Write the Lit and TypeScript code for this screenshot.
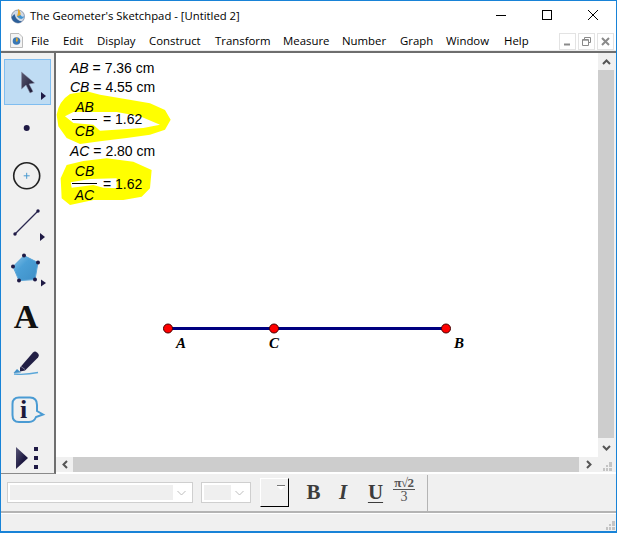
import { LitElement, html, css, svg } from "lit";
import { customElement } from "lit/decorators.js";

const menus: [string, number][] = [
  ["File", 32], ["Edit", 34], ["Display", 52], ["Construct", 66], ["Transform", 68],
  ["Measure", 59], ["Number", 58], ["Graph", 46], ["Window", 58], ["Help", 30],
];

const navy = "#1f1a45";

const toolIcons = [
  svg`<defs><linearGradient id="ar" x1="0" y1="0" x2="1" y2="1"><stop offset="0" stop-color="#5a5a72"/><stop offset="1" stop-color="#15122e"/></linearGradient></defs>
    <path d="M20.5 13 L20.5 30 L25 26 L29 34 L32 32.5 L28 25 L33.5 24 Z" fill="url(#ar)" stroke="#8a90a8" stroke-width=".5"/>
    <path d="M40 33 L45 37 L40 41 Z" fill="${navy}"/>`,
  svg`<circle cx="25.7" cy="22" r="3" fill="${navy}"/>`,
  svg`<circle cx="25.7" cy="23.8" r="13" fill="none" stroke="#222" stroke-width="1.6"/>
    <path d="M25.7 20.8 V26.8 M22.7 23.8 H28.7" stroke="#4a9bd0" stroke-width="1"/>`,
  svg`<path d="M14 35 L37 12" stroke="#2a2850" stroke-width="1.3"/>
    <circle cx="14" cy="35" r="1.7" fill="${navy}"/><circle cx="37" cy="12" r="1.7" fill="${navy}"/>
    <path d="M39 34 L44 38 L39 42 Z" fill="${navy}"/>`,
  svg`<defs><linearGradient id="pg" x1="0" y1="0" x2="1" y2="1"><stop offset="0" stop-color="#8cc6ea"/><stop offset=".4" stop-color="#4a9fd6"/><stop offset="1" stop-color="#3e8ec6"/></linearGradient></defs>
    <path d="M23 10.6 L37 17.6 L34 34.6 L18 35.6 L12 21.6 Z" fill="url(#pg)" stroke="#5aa5d8" stroke-width="1"/>
    ${[[23, 10.6], [37, 17.6], [34, 34.6], [18, 35.6], [12, 21.6]].map(([x, y]) => svg`<circle cx="${x}" cy="${y}" r="2" fill="${navy}"/>`)}
    <path d="M40 34.6 L45 38.1 L40 41.6 Z" fill="${navy}"/>`,
  svg`<text x="25" y="36" text-anchor="middle" class="big-a">A</text>`,
  svg`<g transform="translate(-1 1.5)">
    <path d="M20 27 L33 12 Q35 10 37 12 L38.5 13.5 Q39.5 15 38 17 L25 30 L20 31 Z" fill="#221f45"/>
    <path d="M21 26 L25 29" stroke="#7b7a95" stroke-width="1"/>
    <path d="M13.5 32.5 L17 28.5 L21 32 Z" fill="#3f8fc7"/>
    <path d="M14 33.5 Q26 34.5 38 32" stroke="#5ba7d9" stroke-width="1.3" fill="none"/></g>`,
  svg`<path d="M18 12.5 H29 Q36 12.5 36 20 V26 L42 29.5 L35 32 Q33 37 28 37 H18 Q11.5 37 11.5 30 V19 Q11.5 12.5 18 12.5 Z" fill="none" stroke="#4a9bd3" stroke-width="2"/>
    <text x="22.5" y="33" text-anchor="middle" class="info">i</text>`,
  svg`<defs><linearGradient id="pl" x1="0" y1="0" x2="1" y2="1"><stop offset="0" stop-color="#5a5878"/><stop offset=".6" stop-color="#1c1840"/></linearGradient></defs>
    <path d="M15 15 L27 26 L15 37 Z" fill="url(#pl)"/>
    <path d="M33 15 h4 v4 h-4 Z M33 24 h4 v4 h-4 Z M33 33 h4 v4 h-4 Z" fill="${navy}"/>`,
];

@customElement("app-root")
export class AppRoot extends LitElement {
  static styles = css`
    :host {
      display: block;
      width: 617px;
      height: 533px;
      font-family: "Open Sans", "Liberation Sans", sans-serif;
      color: #000;
    }
    .window {
      box-sizing: border-box;
      width: 617px;
      height: 533px;
      border: 1px solid #1883d7;
      border-bottom-width: 2px;
      background: #f0f0f0;
      display: flex;
      flex-direction: column;
      overflow: hidden;
    }
    .title {
      height: 29px;
      flex: none;
      background: #fff;
      display: flex;
      align-items: center;
      font-size: 11.3px;
      padding-left: 9px;
    }
    .title-text { margin-left: 4px; margin-top: -1px; white-space: nowrap; }
    .controls { margin-left: auto; display: flex; }
    .controls svg { width: 46px; height: 29px; display: block; }
    .menubar {
      height: 21px;
      flex: none;
      background: #fff;
      display: flex;
      align-items: center;
      font-size: 11.4px;
      padding-left: 9px;
      box-shadow: inset 0 -1px 0 #ececec;
    }
    .doc { margin-right: 8px; flex: none; }
    .menu-item { white-space: nowrap; flex: none; }
    .mdi { margin-left: auto; display: flex; gap: 2px; padding-right: 2px; margin-top: 2px; }
    .mdi span {
      box-sizing: border-box;
      width: 17px;
      height: 17px;
      border: 1px solid #e3e3e3;
      display: flex;
      align-items: center;
      justify-content: center;
    }
    .rule { height: 2px; flex: none; background: #6e6e6e; }
    .body { flex: none; height: 421px; display: flex; }
    .tools {
      width: 55px;
      flex: none;
      box-sizing: border-box;
      border-right: 2px solid #6f6f6f;
      border-bottom: 1px solid #8a8a8a;
      height: 421px;
      padding: 6px 0 0 3px;
      background: #f0f0f0;
      display: grid;
      grid-auto-rows: 46.6px;
    }
    .tool { width: 47px; height: 46px; box-sizing: border-box; border: 1px solid transparent; }
    .tool.on { background: #bfdcf3; border-color: #7fbdf0; }
    .tool svg { display: block; width: 52px; height: 46px; margin: -1px 0 0 -4px; overflow: visible; }
    .big-a { font: bold 34px "Liberation Serif", serif; fill: #111; }
    .info { font: bold 26px "Liberation Serif", serif; fill: #1c1a3c; }
    .main { flex: 1; display: flex; flex-direction: column; min-width: 0; background: #fff; }
    .view { flex: none; height: 404px; display: flex; background: #f0f0f0; }
    .canvas { position: relative; flex: 1; background: #fff; overflow: hidden; }
    .canvas > svg { position: absolute; inset: 0; width: 100%; height: 100%; }
    .measures {
      position: absolute;
      left: 14px;
      top: 6px;
      font: 14px "Liberation Sans", Arial, sans-serif;
      color: #000;
    }
    .line { height: 18.5px; line-height: 18.5px; white-space: nowrap; }
    .ratio { display: flex; align-items: center; height: 46px; padding-left: 2px; }
    .frac { display: flex; flex-direction: column; align-items: center; width: 25px; line-height: 19px; }
    .frac i:first-child { border-bottom: 1px solid #000; padding-bottom: 2px; width: 100%; text-align: center; }
    .frac i:last-child { padding-top: 2px; }
    .ratio span { margin-left: 6px; }
    .label {
      position: absolute;
      font: italic bold 15px "Liberation Serif", serif;
      color: #000;
    }
    .vbar { width: 16px; flex: none; margin-right: 2px; display: flex; flex-direction: column; background: #f0f0f0; }
    .vthumb { flex: 1; background: #cdcdcd; }
    .arrow-v { height: 17px; flex: none; display: flex; align-items: center; justify-content: center; }
    .arrow-v.down { height: 19px; }
    .hbar { height: 15px; flex: none; display: flex; background: #f0f0f0; }
    .arrow-h { width: 17px; flex: none; display: flex; align-items: center; justify-content: center; }
    .arrow-h.right { width: 19px; }
    .hthumb { flex: 1; background: #cdcdcd; }
    .corner { width: 18px; flex: none; display: flex; align-items: flex-end; justify-content: flex-end; padding: 0 4px 1px 0; box-sizing: border-box; }
    .format {
      height: 37px;
      flex: none;
      display: flex;
      align-items: center;
      padding-left: 6px;
      box-sizing: border-box;
    }
    .combo {
      box-sizing: border-box;
      height: 21px;
      border: 1px solid #cfcfcf;
      background: #fff;
      padding: 2px;
      display: flex;
      align-items: stretch;
    }
    .combo b { display: block; background: #efefef; }
    .combo svg { margin: auto; }
    .combo.a { width: 186px; }
    .combo.a b { width: 163px; }
    .combo.b { width: 50px; margin-left: 8px; }
    .combo.b b { width: 27px; }
    .swatch {
      box-sizing: border-box;
      width: 29px;
      height: 29px;
      margin-left: 9px;
      border: 1px solid;
      border-color: #fff #000 #000 #fff;
      position: relative;
      flex: none;
    }
    .swatch::before {
      content: "";
      position: absolute;
      right: 3px;
      top: 6px;
      width: 8px;
      height: 1px;
      background: #777;
    }
    .swatch::after {
      content: "";
      position: absolute;
      right: 3px;
      top: 7px;
      border: 4px solid transparent;
      border-top-color: #fff;
    }
    .styles {
      display: flex;
      align-items: center;
      font-family: "Liberation Serif", serif;
      color: #3c3c3c;
      margin-left: 16px;
      font-size: 21px;
      font-weight: bold;
      height: 36px;
    }
    .styles span { display: block; text-align: center; }
    .st-b { width: 17px; }
    .st-i { width: 10px; margin-left: 16px; font-style: italic; }
    .st-u { width: 17px; margin-left: 19px; text-decoration: underline; text-underline-offset: 3px; text-decoration-thickness: 1px; }
    .st-f {
      margin-left: 9px;
      width: 22px;
      display: flex !important;
      flex-direction: column;
      align-items: center;
      color: #555;
      margin-top: -4px;
    }
    .st-f u { display: block; text-decoration: none; border-bottom: 1px solid #555; font-size: 13px; letter-spacing: -.5px; width: 100%; line-height: 12px; }
    .st-f em { font-style: normal; font-weight: normal; font-size: 14px; line-height: 14px; }
    .sep { width: 1px; height: 36px; background: #b4b4b4; margin-left: 12px; }
    .status {
      flex: 1;
      border-top: 2px solid #b4b4b4;
      box-shadow: inset 0 1px 0 #fff;
      display: flex;
      align-items: flex-end;
      justify-content: flex-end;
      padding: 0 1px 1px 0;
    }
    .grip { display: block; }
  `;

  private grip() {
    return html`<svg class="grip" width="9" height="9" viewBox="0 0 9 9" fill="#c4c4c4">
      <path d="M6 0h3v3H6z M3 3h2v2H3z M6 3h3v2H6z M0 6h2v3H0z M3 6h2v3H3z M6 6h3v3H6z" />
    </svg>`;
  }

  private chevron() {
    return html`<svg width="9" height="6" viewBox="0 0 9 6"><path d="M.5 1 L4.5 5 L8.5 1" fill="none" stroke="#bdbdbd" /></svg>`;
  }

  render() {
    return html`
      <div class="window">
        <div class="title">
          <svg width="16" height="16" viewBox="0 0 16 16">
            <circle cx="8" cy="8.5" r="6.5" fill="#cfd9e6" stroke="#7f8aa0" stroke-width=".8" />
            <path d="M1.6 9 A6.5 6.5 0 0 0 12 13.5 Q6 13 4.5 6 Z" fill="#2c5f99" />
            <path d="M8 .8 Q12.5 5 9.5 10.5 L7 8.5 Q8.5 5 8 .8 Z" fill="#e6a92a" />
            <path d="M7 8.5 L9.5 10.5 Q13 12 14.5 8 Q12 10 10.5 7 Z" fill="#3f93d4" />
          </svg>
          <span class="title-text">The Geometer's Sketchpad - [Untitled 2]</span>
          <div class="controls">
            <svg viewBox="0 0 46 29"><path d="M18 14.5 H28" stroke="#000" /></svg>
            <svg viewBox="0 0 46 29"><rect x="18.5" y="9.5" width="9" height="9" fill="none" stroke="#000" /></svg>
            <svg viewBox="0 0 46 29"><path d="M18 9 L28 19 M28 9 L18 19" stroke="#000" /></svg>
          </div>
        </div>
        <div class="menubar">
          <svg class="doc" width="13" height="15" viewBox="0 0 13 15">
            <path d="M.5 .5 H9 L12.5 4 V14.5 H.5 Z" fill="#f4f4f4" stroke="#bbb" />
            <circle cx="6.5" cy="8" r="3.8" fill="#3a78b5" />
            <path d="M6.5 4 Q9 6.5 7 9 L5.8 8 Z" fill="#e6a92a" />
          </svg>
          ${menus.map(([m, w]) => html`<span class="menu-item" style="width:${w}px">${m}</span>`)}
          <div class="mdi">
            <span><svg width="9" height="9" viewBox="0 0 9 9"><path d="M1 7.5 H7" stroke="#8a8a8a" stroke-width="2" /></svg></span>
            <span><svg width="9" height="9" viewBox="0 0 9 9"><path d="M2.5 2.5 V.5 H8.5 V5.5 H6.5 M.5 2.5 H6.5 V8.5 H.5 Z M.5 3.2 H6.5" fill="none" stroke="#8a8a8a" /></svg></span>
            <span><svg width="9" height="9" viewBox="0 0 9 9"><path d="M1 1 L8 8 M8 1 L1 8" stroke="#8a8a8a" stroke-width="2" /></svg></span>
          </div>
        </div>
        <div class="rule"></div>
        <div class="body">
          <div class="tools">
            ${toolIcons.map(
              (ic, i) => html`<div class="tool ${i === 0 ? "on" : ""}"><svg viewBox="0 0 52 46">${ic}</svg></div>`
            )}
          </div>
          <div class="main">
            <div class="view">
              <div class="canvas">
                <svg viewBox="56 53 542 404">
                  <g transform="translate(50 88) scale(.3333)">
                    <path fill="#ffff00" fill-rule="evenodd" d="M20 80 Q26 40 60 18 L110 10 L150 20 L230 34 L300 46 L345 66 L362 95 L345 125 L300 140 L230 150 L150 160 L90 168 L50 150 L25 115 Z M45 85 L70 72 L130 72 L200 72 L270 85 L330 110 L280 120 L150 128 L130 110 L70 105 Z" />
                  </g>
                  <g transform="translate(50 155) scale(.3333)">
                    <path fill="#ffff00" fill-rule="evenodd" d="M32 70 L50 30 L100 18 L170 10 L250 20 L305 45 L300 100 L275 125 L220 135 L130 135 L60 150 L35 130 Z M62 82 L120 72 L200 70 L200 100 L160 98 L130 90 L65 98 Z" />
                  </g>
                  <path d="M168 328.5 H446" stroke="#000080" stroke-width="3" />
                  ${[168, 274, 446].map(
                    (x) => svg`<circle cx="${x}" cy="328.5" r="4.5" fill="#f00" stroke="#400" stroke-width="1" />`
                  )}
                </svg>
                <div class="measures">
                  <div class="line"><i>AB</i> = 7.36 cm</div>
                  <div class="line"><i>CB</i> = 4.55 cm</div>
                  <div class="ratio"><div class="frac"><i>AB</i><i>CB</i></div><span>= 1.62</span></div>
                  <div class="line"><i>AC</i> = 2.80 cm</div>
                  <div class="ratio"><div class="frac"><i>CB</i><i>AC</i></div><span>= 1.62</span></div>
                </div>
                <span class="label" style="left:120px;top:282px">A</span>
                <span class="label" style="left:213px;top:282px">C</span>
                <span class="label" style="left:398px;top:282px">B</span>
              </div>
              <div class="vbar">
                <div class="arrow-v"><svg width="9" height="6" viewBox="0 0 9 6"><path d="M1 5 L4.5 1.5 L8 5" fill="none" stroke="#555" stroke-width="2" /></svg></div>
                <div class="vthumb"></div>
                <div class="arrow-v down"><svg width="9" height="6" viewBox="0 0 9 6"><path d="M1 1 L4.5 4.5 L8 1" fill="none" stroke="#555" stroke-width="2" /></svg></div>
              </div>
            </div>
            <div class="hbar">
              <div class="arrow-h"><svg width="6" height="9" viewBox="0 0 6 9"><path d="M5 1 L1.5 4.5 L5 8" fill="none" stroke="#555" stroke-width="2" /></svg></div>
              <div class="hthumb"></div>
              <div class="arrow-h right"><svg width="6" height="9" viewBox="0 0 6 9"><path d="M1 1 L4.5 4.5 L1 8" fill="none" stroke="#555" stroke-width="2" /></svg></div>
              <div class="corner">${this.grip()}</div>
            </div>
          </div>
        </div>
        <div class="format">
          <div class="combo a"><b></b>${this.chevron()}</div>
          <div class="combo b"><b></b>${this.chevron()}</div>
          <div class="swatch"></div>
          <div class="styles">
            <span class="st-b">B</span>
            <span class="st-i">I</span>
            <span class="st-u">U</span>
            <span class="st-f"><u>π√2</u><em>3</em></span>
          </div>
          <div class="sep"></div>
        </div>
        <div class="status">${this.grip()}</div>
      </div>
    `;
  }
}
